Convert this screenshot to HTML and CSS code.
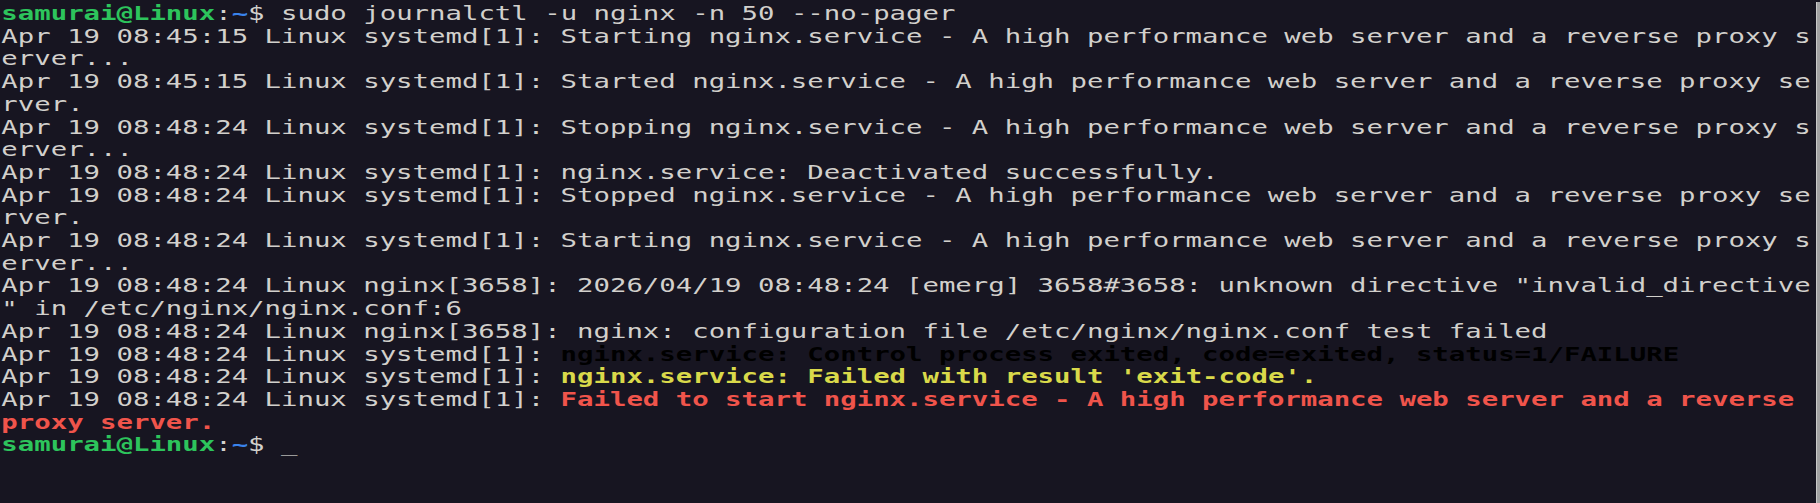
FILE: index.html
```html
<!DOCTYPE html>
<html>
<head>
<meta charset="utf-8">
<link rel="stylesheet" href="styles.css">
</head>
<body>
<div class="term">
<pre class="screen"><span class="pu">samurai@Linux</span>:<span class="pd">~</span>$ sudo journalctl -u nginx -n 50 --no-pager
Apr 19 08:45:15 Linux systemd[1]: Starting nginx.service - A high performance web server and a reverse proxy s
erver...
Apr 19 08:45:15 Linux systemd[1]: Started nginx.service - A high performance web server and a reverse proxy se
rver.
Apr 19 08:48:24 Linux systemd[1]: Stopping nginx.service - A high performance web server and a reverse proxy s
erver...
Apr 19 08:48:24 Linux systemd[1]: nginx.service: Deactivated successfully.
Apr 19 08:48:24 Linux systemd[1]: Stopped nginx.service - A high performance web server and a reverse proxy se
rver.
Apr 19 08:48:24 Linux systemd[1]: Starting nginx.service - A high performance web server and a reverse proxy s
erver...
Apr 19 08:48:24 Linux nginx[3658]: 2026/04/19 08:48:24 [emerg] 3658#3658: unknown directive "invalid_directive
" in /etc/nginx/nginx.conf:6
Apr 19 08:48:24 Linux nginx[3658]: nginx: configuration file /etc/nginx/nginx.conf test failed
Apr 19 08:48:24 Linux systemd[1]: <b class="blk">nginx.service: Control process exited, code=exited, status=1/FAILURE</b>
Apr 19 08:48:24 Linux systemd[1]: <b class="yel">nginx.service: Failed with result 'exit-code'.</b>
Apr 19 08:48:24 Linux systemd[1]: <b class="red">Failed to start nginx.service - A high performance web server and a reverse 
proxy server.</b>
<span class="pu">samurai@Linux</span>:<span class="pd">~</span>$ <span class="cur">_</span></pre>
<div class="scrollbar"></div>
</div>
</body>
</html>
```
FILE: styles.css
```css
html, body {
  margin: 0;
  padding: 0;
  background: #171521;
  overflow: hidden;
}
.term {
  position: relative;
  width: 1820px;
  height: 503px;
  background: #171521;
  overflow: hidden;
}
.screen {
  margin: 0;
  padding: 2px 0 0 1px;
  font-family: "DejaVu Sans Mono", monospace;
  font-size: 20px;
  line-height: 22.7px;
  color: #d2d0cc;
  white-space: pre;
  transform: scaleX(1.366);
  transform-origin: 0 0;
}
.pu {
  color: #2dc45c;
  font-weight: bold;
}
.pd {
  color: #3a83ec;
  font-weight: bold;
}
.blk {
  color: #000000;
}
.yel {
  color: #d9d94a;
}
.red {
  color: #f0544b;
}
.cur {
  color: #9a9a9a;
}
.scrollbar {
  position: absolute;
  right: 0;
  top: 2px;
  bottom: 0;
  width: 3px;
  background: #a2a2a2;
  border-left: 1px solid #c9c9c9;
}
```
